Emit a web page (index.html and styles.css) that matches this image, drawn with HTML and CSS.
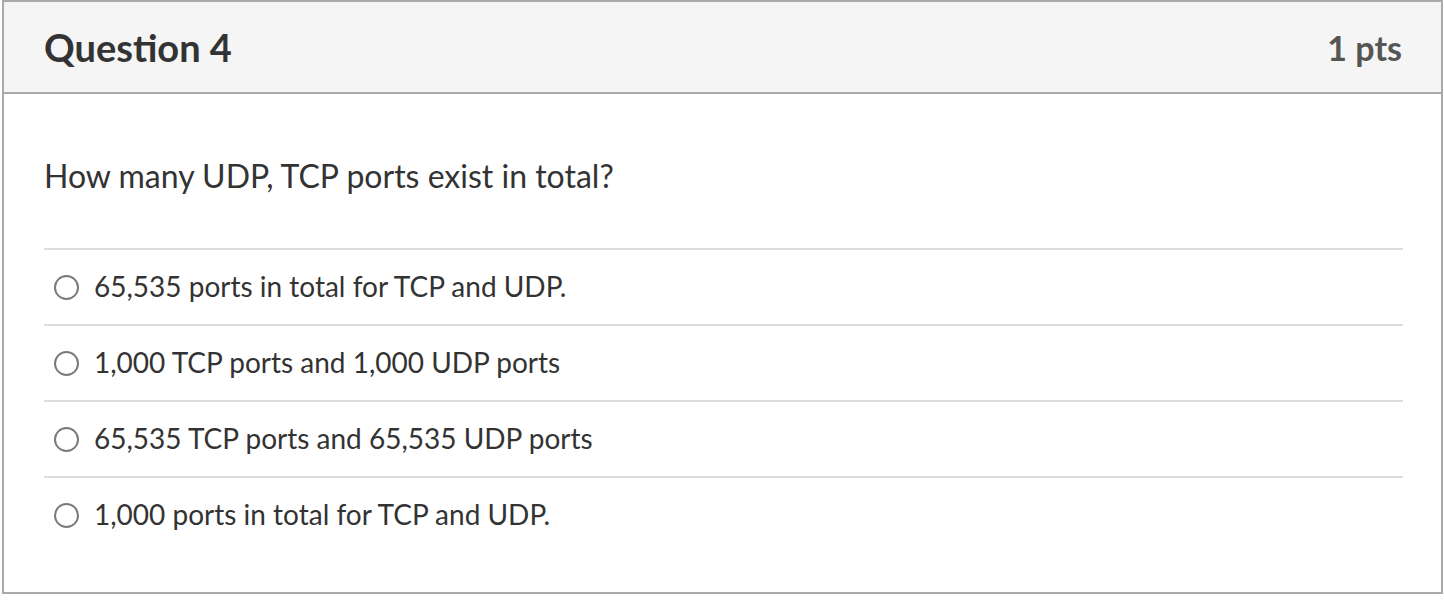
FILE: index.html
```html
<!DOCTYPE html>
<html>
<head>
<meta charset="utf-8">
<link rel="stylesheet" href="styles.css">
</head>
<body>
<div class="card">
  <div class="header">
    <h2 class="title">Question 4</h2>
    <div class="pts">1 pts</div>
  </div>
  <div class="body">
    <p class="question">How many UDP, TCP ports exist in total?</p>
    <div class="answers">
      <label class="answer"><span class="radio"></span><span class="text">65,535 ports in total for TCP and UDP.</span></label>
      <label class="answer"><span class="radio"></span><span class="text">1,000 TCP ports and 1,000 UDP ports</span></label>
      <label class="answer"><span class="radio"></span><span class="text">65,535 TCP ports and 65,535 UDP ports</span></label>
      <label class="answer"><span class="radio"></span><span class="text">1,000 ports in total for TCP and UDP.</span></label>
    </div>
  </div>
</div>
</body>
</html>
```
FILE: styles.css
```css
html, body {
  margin: 0;
  padding: 0;
  background: #fff;
}
body {
  font-family: Lato, "Open Sans", sans-serif;
  color: #2d3b45;
}
.card {
  margin: 0 1px 0 2px;
  border: 2px solid #aaaaaa;
  height: 594px;
  box-sizing: border-box;
  display: flex;
  flex-direction: column;
}
.header {
  background: #f5f5f5;
  border-bottom: 2px solid #aaaaaa;
  height: 90px;
  flex: none;
  display: flex;
  align-items: center;
  justify-content: space-between;
  padding: 0 39px 0 40px;
}
.title {
  margin: 0;
  font-size: 38px;
  font-weight: 700;
  color: #333;
}
.pts {
  font-size: 34px;
  font-weight: 700;
  color: #555;
}
.body {
  padding: 0 38px 0 40px;
}
.question {
  margin: 0;
  padding-top: 62px;
  height: 92px;
  font-size: 32px;
  line-height: 40px;
  color: #333;
  border-bottom: 2px solid #dddddd;
}
.answer {
  display: flex;
  align-items: center;
  height: 74px;
  border-bottom: 2px solid #dddddd;
  font-size: 28px;
  color: #333;
}
.answer:last-child {
  border-bottom: none;
}
.text {
  margin-bottom: 3px;
}
.radio {
  width: 25px;
  height: 25px;
  border: 2px solid #7a7a7a;
  border-radius: 50%;
  box-sizing: border-box;
  margin-left: 10px;
  margin-right: 15px;
  flex: none;
}
```
